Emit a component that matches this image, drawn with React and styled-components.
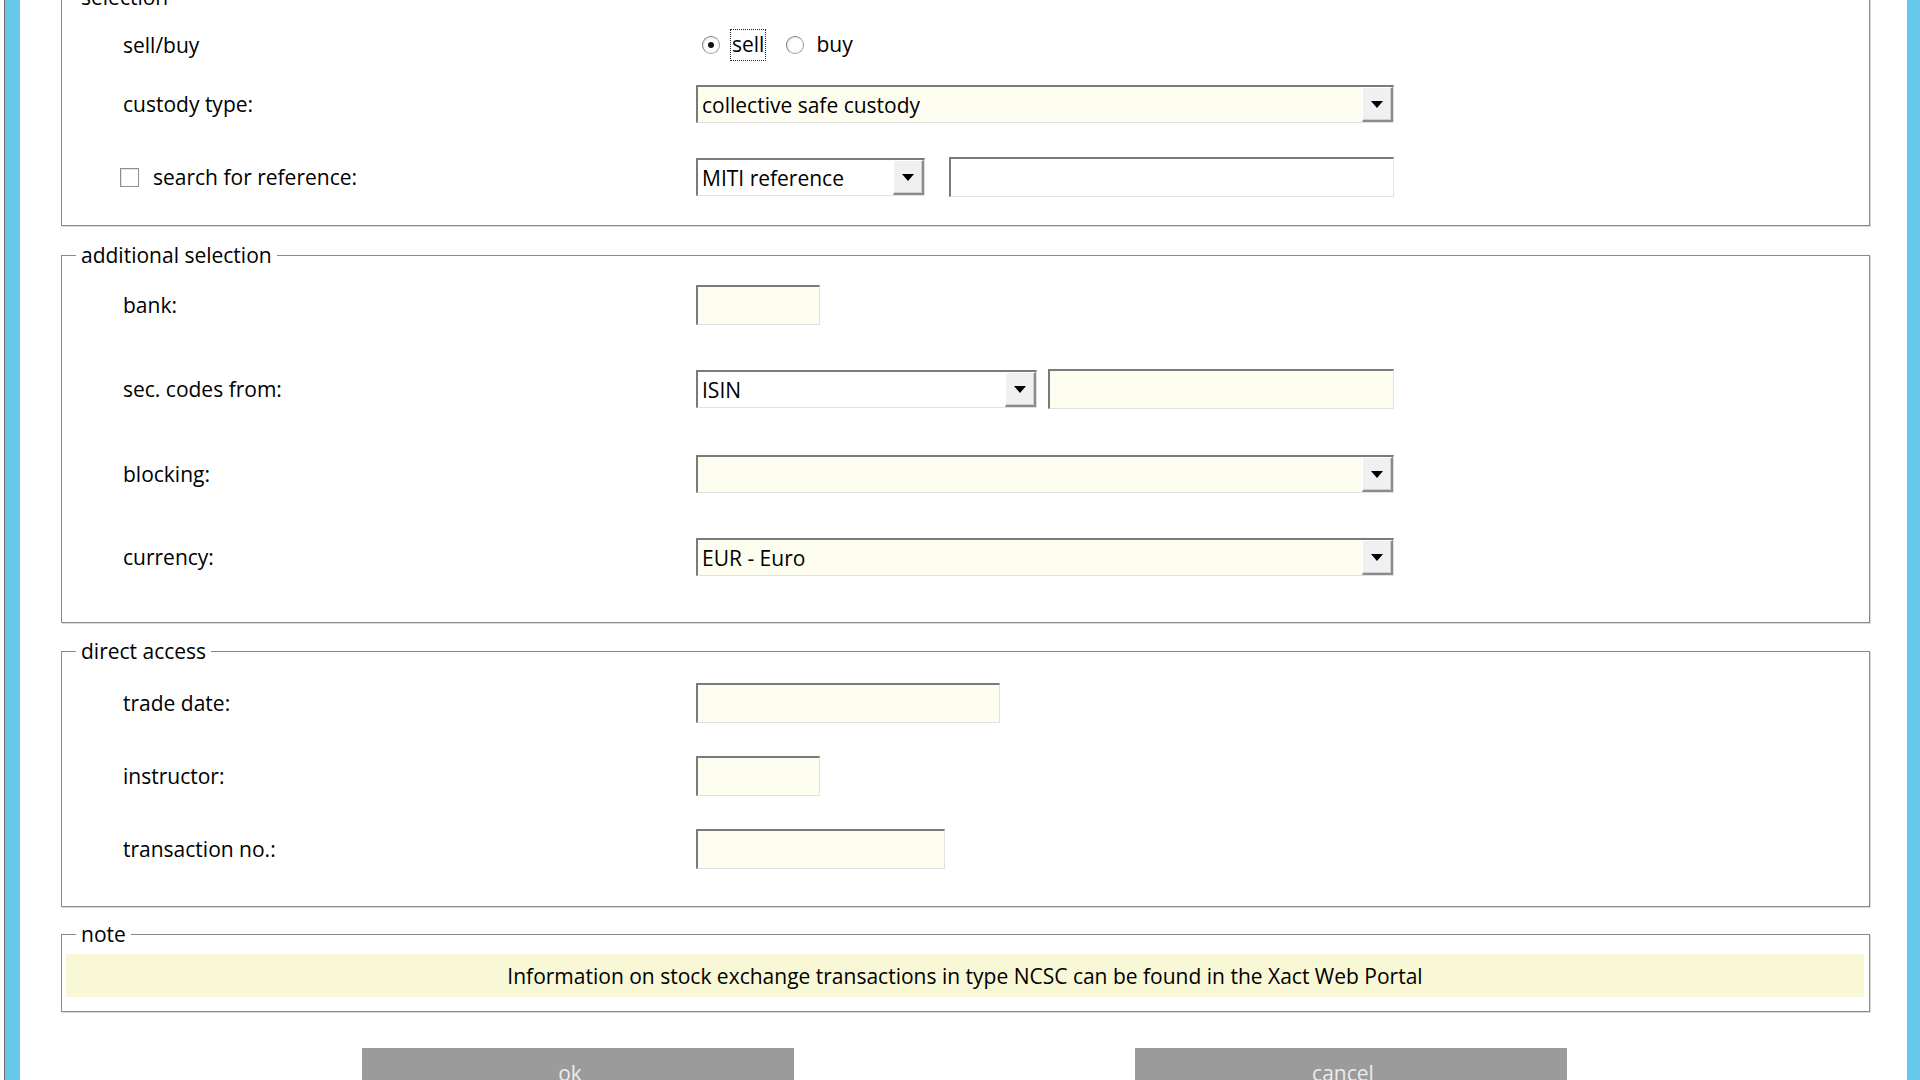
import React from 'react';
import styled, { createGlobalStyle } from 'styled-components';

const GlobalStyle = createGlobalStyle`
  html, body {
    margin: 0;
    padding: 0;
    background: #ffffff;
  }
  body {
    font-family: "Open Sans", "Noto Sans", sans-serif;
    font-size: 21px;
    color: #000;
  }
`;

const Window = styled.div`
  display: flex;
  height: 1080px;
  overflow: hidden;
  background: #fff;
`;

const FrameEdge = styled.div`
  flex: none;
  width: ${({ $w }) => $w}px;
  margin-left: ${({ $ml }) => $ml || 0}px;
  background: #66c9eb;
  border-left: ${({ $line }) => ($line ? '1px solid #6e6e6e' : 'none')};
`;

const Content = styled.div`
  flex: 1;
  min-width: 0;
  padding: 0 37px 0 41px;
`;

const Group = styled.fieldset`
  margin: ${({ $mt }) => $mt}px 0 0;
  padding: 0 0 ${({ $pb }) => $pb}px;
  border: 1px solid #8a8a8a;
  box-shadow: 1px 1px 0 #dadada;
  min-width: 0;
`;

const Legend = styled.legend`
  margin-left: 14px;
  padding: 0 5px;
  line-height: 26px;
  font-size: 21px;
`;

const Row = styled.div`
  display: flex;
  align-items: center;
  height: ${({ $h }) => $h || 38}px;
  margin-top: ${({ $mt }) => $mt}px;
  padding-left: 61px;
`;

const Label = styled.div`
  flex: none;
  width: 573px;
  display: flex;
  align-items: center;
`;

const Controls = styled.div`
  display: flex;
  align-items: center;
  gap: ${({ $gap }) => $gap || 0}px;
  height: 100%;
`;

const CheckBox = styled.span`
  width: 17px;
  height: 17px;
  margin-left: -3px;
  margin-right: 14px;
  border: 1px solid #8e8e8e;
  box-shadow: inset 1px 1px 0 #e4e4e4;
  background: #fff;
`;

const RadioItem = styled.label`
  display: flex;
  align-items: center;
  margin-left: ${({ $ml }) => $ml || 0}px;
`;

const RadioCircle = styled.span`
  position: relative;
  box-sizing: border-box;
  width: 18px;
  height: 18px;
  border-radius: 50%;
  border: 1px solid #a0a0a0;
  border-top-color: #7e7e7e;
  border-left-color: #7e7e7e;
  background: radial-gradient(circle at 60% 60%, #ffffff 45%, #e4e4e4 100%);
  margin-right: 10px;

  &::after {
    content: '';
    display: ${({ $checked }) => ($checked ? 'block' : 'none')};
    position: absolute;
    left: 5px;
    top: 5px;
    width: 6px;
    height: 6px;
    border-radius: 50%;
    background: #111;
  }
`;

const RadioText = styled.span`
  padding: 2px 1px 4px;
  border: 1px dotted ${({ $focus }) => ($focus ? '#222' : 'transparent')};
  line-height: 24px;
`;

const Combo = styled.div`
  display: flex;
  box-sizing: border-box;
  width: ${({ $w }) => $w}px;
  height: 38px;
  border-top: 2px solid #7a7a7a;
  border-left: 2px solid #7a7a7a;
  border-right: 1px solid #e2e2e2;
  border-bottom: 1px solid #e2e2e2;
  background: ${({ $yellow }) => ($yellow ? '#fefef0' : '#ffffff')};
`;

const ComboValue = styled.span`
  flex: 1;
  display: flex;
  align-items: center;
  padding-left: 4px;
  white-space: nowrap;
  overflow: hidden;
`;

const DropButton = styled.span`
  flex: none;
  box-sizing: border-box;
  width: 31px;
  display: flex;
  align-items: center;
  justify-content: center;
  background: #f0f0f0;
  border-top: 1px solid #ffffff;
  border-left: 1px solid #ffffff;
  border-right: 2px solid #8a8a8a;
  border-bottom: 2px solid #8a8a8a;
  box-shadow: inset -1px -1px 0 #d0d0d0;
`;

const TextBox = styled.div`
  box-sizing: border-box;
  width: ${({ $w }) => $w}px;
  height: 40px;
  border-top: 2px solid #7a7a7a;
  border-left: 2px solid #7a7a7a;
  border-right: 1px solid #e2e2e2;
  border-bottom: 1px solid #e2e2e2;
  background: ${({ $yellow }) => ($yellow ? '#fefef0' : '#ffffff')};
`;

const NoteBand = styled.div`
  display: flex;
  align-items: center;
  justify-content: center;
  height: 43px;
  margin: 7px 5px 0 4px;
  background: #f8f8d6;
`;

const ButtonRow = styled.div`
  display: flex;
  gap: 341px;
  margin-top: 36px;
  padding-left: 301px;
`;

const DialogButton = styled.button`
  width: 432px;
  height: 50px;
  padding: 0 16px 0 0;
  border: none;
  background: #9b9b9b;
  color: #ececec;
  font-family: inherit;
  font-size: 21px;
`;

const Arrow = () => (
  <svg width="12" height="7" viewBox="0 0 12 7">
    <polygon points="0,0 12,0 6,7" fill="#000" />
  </svg>
);

const Select = ({ width, value, yellow }) => (
  <Combo $w={width} $yellow={yellow}>
    <ComboValue>{value}</ComboValue>
    <DropButton>
      <Arrow />
    </DropButton>
  </Combo>
);

const App = () => (
  <>
    <GlobalStyle />
    <Window>
      <FrameEdge $w={15} $ml={4} $line />
      <Content>
        <Group $mt={-16} $pb={28}>
          <Legend>selection</Legend>
          <Row $mt={16}>
            <Label>sell/buy</Label>
            <Controls>
              <RadioItem $ml={6}>
                <RadioCircle $checked />
                <RadioText $focus>sell</RadioText>
              </RadioItem>
              <RadioItem $ml={20}>
                <RadioCircle />
                <RadioText>buy</RadioText>
              </RadioItem>
            </Controls>
          </Row>
          <Row $mt={21}>
            <Label>custody type:</Label>
            <Select width={698} value="collective safe custody" yellow />
          </Row>
          <Row $mt={34} $h={40}>
            <Label>
              <CheckBox />
              search for reference:
            </Label>
            <Controls $gap={24}>
              <Select width={229} value="MITI reference" />
              <TextBox $w={445} />
            </Controls>
          </Row>
        </Group>

        <Group $mt={16} $pb={46}>
          <Legend>additional selection</Legend>
          <Row $mt={17} $h={40}>
            <Label>bank:</Label>
            <TextBox $w={124} $yellow />
          </Row>
          <Row $mt={45}>
            <Label>sec. codes from:</Label>
            <Controls $gap={11}>
              <Select width={341} value="ISIN" />
              <TextBox $w={346} $yellow />
            </Controls>
          </Row>
          <Row $mt={47}>
            <Label>blocking:</Label>
            <Select width={698} value="" yellow />
          </Row>
          <Row $mt={45}>
            <Label>currency:</Label>
            <Select width={698} value="EUR - Euro" yellow />
          </Row>
        </Group>

        <Group $mt={15} $pb={37}>
          <Legend>direct access</Legend>
          <Row $mt={19} $h={40}>
            <Label>trade date:</Label>
            <TextBox $w={304} $yellow />
          </Row>
          <Row $mt={33} $h={40}>
            <Label>instructor:</Label>
            <TextBox $w={124} $yellow />
          </Row>
          <Row $mt={33} $h={40}>
            <Label>transaction no.:</Label>
            <TextBox $w={249} $yellow />
          </Row>
        </Group>

        <Group $mt={14} $pb={14}>
          <Legend>note</Legend>
          <NoteBand>
            Information on stock exchange transactions in type NCSC can be found in the Xact Web Portal
          </NoteBand>
        </Group>

        <ButtonRow>
          <DialogButton>ok</DialogButton>
          <DialogButton>cancel</DialogButton>
        </ButtonRow>
      </Content>
      <FrameEdge $w={13} />
    </Window>
  </>
);

export default App;
